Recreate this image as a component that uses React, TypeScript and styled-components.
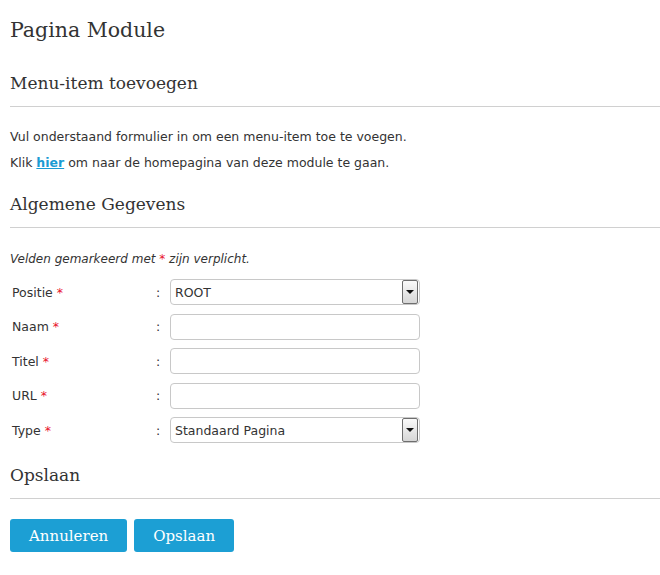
import React from 'react';
import styled, { createGlobalStyle } from 'styled-components';

const GlobalStyle = createGlobalStyle`
  body {
    margin: 0;
    background: #fff;
    font-family: "DejaVu Sans", Verdana, sans-serif;
    color: #333;
  }
`;

const Page = styled.div`
  padding: 0 0 0 10px;
  display: flex;
  flex-direction: column;
`;

const Title = styled.h1`
  margin: 15px 0 0;
  font-family: "DejaVu Serif", "Liberation Serif", serif;
  font-weight: normal;
  font-size: 20.5px;
  line-height: 30px;
  color: #333;
`;

const SectionTitle = styled.h2<{ $top: number }>`
  margin: ${p => p.$top}px 0 0;
  padding-bottom: 11px;
  border-bottom: 1px solid #d0d0d0;
  font-family: "DejaVu Serif", "Liberation Serif", serif;
  font-weight: normal;
  font-size: 17px;
  line-height: 24px;
  color: #333;
`;

const Text = styled.p<{ $top: number; $italic?: boolean }>`
  margin: ${p => p.$top}px 0 0;
  font-size: ${p => (p.$italic ? '12px' : '12.5px')};
  line-height: 16px;
  font-style: ${p => (p.$italic ? 'italic' : 'normal')};
`;

const Link = styled.a`
  color: #1a9bd3;
  font-weight: bold;
  text-decoration: underline;
`;

const Star = styled.span`
  color: #e8102a;
`;

const Form = styled.div`
  margin-top: 12px;
  display: grid;
  grid-template-columns: 146px 14px 250px;
  row-gap: 8.5px;
  align-items: center;
  font-size: 12.5px;
`;

const Label = styled.label`
  padding-left: 2px;
`;

const Colon = styled.span``;

const Input = styled.input`
  box-sizing: border-box;
  width: 250px;
  height: 26px;
  border: 1px solid #c8c8c8;
  border-radius: 4px;
  padding: 0 4px;
  font: inherit;
  color: #333;
  outline: none;
`;

const SelectWrap = styled.div`
  position: relative;
  width: 250px;
  height: 26px;
`;

const Select = styled.select`
  box-sizing: border-box;
  width: 100%;
  height: 100%;
  appearance: none;
  border: 1px solid #c8c8c8;
  border-radius: 4px;
  padding: 0 20px 0 4px;
  background: #fff;
  font-family: inherit;
  font-size: 12.5px;
  color: #333;
  outline: none;
`;

const Arrow = styled.span`
  position: absolute;
  top: 1px;
  right: 2px;
  width: 16px;
  height: 24px;
  box-sizing: border-box;
  border: 1px solid #6e6e6e;
  border-radius: 2px;
  background: linear-gradient(#fafafa, #d6d6d6);
  display: flex;
  align-items: center;
  justify-content: center;
  pointer-events: none;
  &::after {
    content: '';
    border-left: 4px solid transparent;
    border-right: 4px solid transparent;
    border-top: 4px solid #111;
  }
`;

const Buttons = styled.div`
  margin-top: 20px;
  display: flex;
  gap: 7px;
`;

const Button = styled.button`
  height: 33px;
  padding: 0 19px;
  border: none;
  border-radius: 3px;
  background: #1c9fd4;
  color: #fff;
  font-family: "DejaVu Serif", "Liberation Serif", serif;
  font-size: 15px;
  cursor: pointer;
`;

const fields: { label: string; type: 'select' | 'text'; value?: string }[] = [
  { label: 'Positie', type: 'select', value: 'ROOT' },
  { label: 'Naam', type: 'text' },
  { label: 'Titel', type: 'text' },
  { label: 'URL', type: 'text' },
  { label: 'Type', type: 'select', value: 'Standaard Pagina' },
];

export default function App() {
  return (
    <>
      <GlobalStyle />
      <Page>
        <Title>Pagina Module</Title>

        <SectionTitle $top={26}>Menu-item toevoegen</SectionTitle>
        <Text $top={22}>Vul onderstaand formulier in om een menu-item toe te voegen.</Text>
        <Text $top={10}>
          Klik <Link href="#">hier</Link> om naar de homepagina van deze module te gaan.
        </Text>

        <SectionTitle $top={21}>Algemene Gegevens</SectionTitle>
        <Text $top={23} $italic>
          Velden gemarkeerd met <Star>*</Star> zijn verplicht.
        </Text>

        <Form>
          {fields.map(f => (
            <React.Fragment key={f.label}>
              <Label>
                {f.label} <Star>*</Star>
              </Label>
              <Colon>:</Colon>
              {f.type === 'select' ? (
                <SelectWrap>
                  <Select defaultValue={f.value}>
                    <option>{f.value}</option>
                  </Select>
                  <Arrow />
                </SelectWrap>
              ) : (
                <Input type="text" />
              )}
            </React.Fragment>
          ))}
        </Form>

        <SectionTitle $top={20}>Opslaan</SectionTitle>
        <Buttons>
          <Button>Annuleren</Button>
          <Button>Opslaan</Button>
        </Buttons>
      </Page>
    </>
  );
}
